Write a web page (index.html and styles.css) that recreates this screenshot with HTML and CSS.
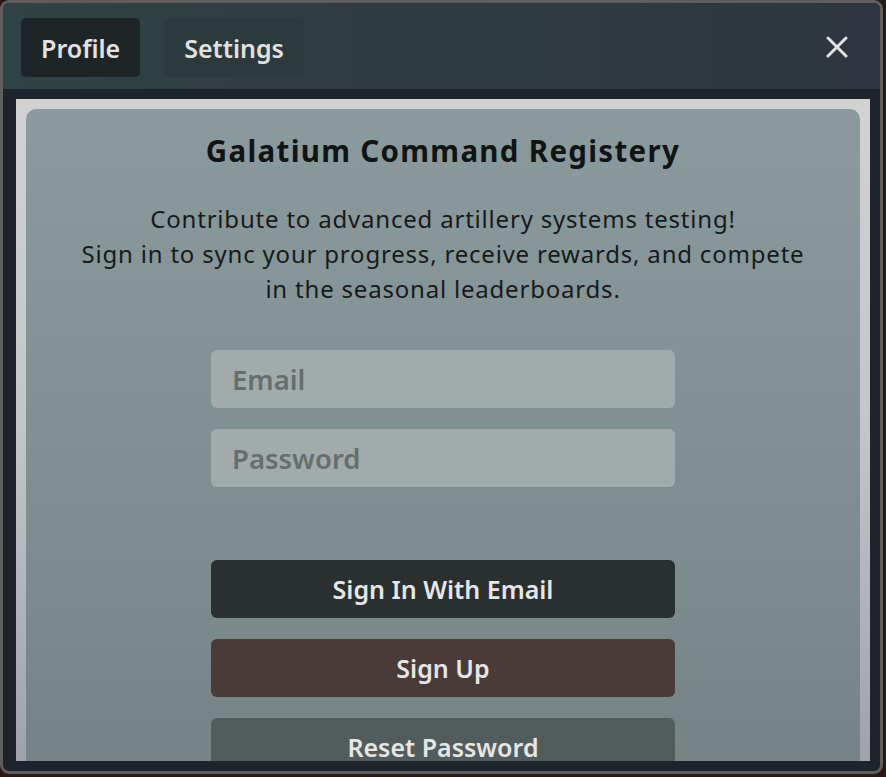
FILE: index.html
```html
<!DOCTYPE html>
<html>
<head>
<meta charset="utf-8">
<link rel="stylesheet" href="styles.css">
</head>
<body>
<div class="window">
  <div class="header">
    <div class="tabs">
      <div class="tab active">Profile</div>
      <div class="tab">Settings</div>
    </div>
    <div class="close">
      <svg width="22" height="22" viewBox="0 0 22 22"><path d="M2 2 L20 20 M20 2 L2 20" stroke="#e2e2e2" stroke-width="3" stroke-linecap="round"/></svg>
    </div>
  </div>
  <div class="body">
    <div class="scroll">
      <div class="panel">
        <h1 class="title">Galatium Command Registery</h1>
        <p class="intro">Contribute to advanced artillery systems testing!<br>Sign in to sync your progress, receive rewards, and compete<br>in the seasonal leaderboards.</p>
        <div class="form">
          <input class="field" type="text" placeholder="Email">
          <input class="field" type="password" placeholder="Password">
          <div class="buttons">
            <button class="btn btn-signin">Sign In With Email</button>
            <button class="btn btn-signup">Sign Up</button>
            <button class="btn btn-reset">Reset Password</button>
          </div>
        </div>
      </div>
    </div>
  </div>
</div>
</body>
</html>
```

FILE: styles.css
```css
* { box-sizing: border-box; }
html, body { margin: 0; padding: 0; }
body {
  width: 886px;
  height: 777px;
  background: #2a1818;
  font-family: "Noto Sans", "Open Sans", sans-serif;
  overflow: hidden;
}
.window {
  width: 883px;
  height: 774px;
  border: 3px solid #5e5e5e;
  border-radius: 9px;
  background: #1f232b;
  overflow: hidden;
  display: flex;
  flex-direction: column;
}
.header {
  height: 86px;
  flex: none;
  background: linear-gradient(90deg, #2f4244 0%, #2f3c42 50%, #2e3540 100%);
  display: flex;
  align-items: flex-start;
  justify-content: space-between;
  padding: 15px 0 0 18px;
}
.tabs { display: flex; gap: 24px; }
.tab {
  height: 59px;
  padding: 0 20px;
  border-radius: 5px;
  background: #2c3a3c;
  color: #e2e2e2;
  font-size: 25px;
  font-weight: 600;
  display: flex;
  align-items: center;
}
.tab.active { background: #1e2527; }
.close {
  width: 22px;
  height: 22px;
  margin: 18px 32px 0 0;
  display: flex;
}
.body {
  flex: 1;
  padding: 10px 10px 10px 13px;
  display: flex;
  min-height: 0;
}
.scroll {
  flex: 1;
  background: linear-gradient(180deg, #d2d2d2 0%, #c3c5c8 50%, #9fa3a9 100%);
  padding: 10px 10px 0 10px;
  overflow: hidden;
}
.panel {
  height: 800px;
  border-radius: 10px 10px 0 0;
  background: linear-gradient(180deg, #8b9b9d 0%, #7c8b8c 60%, #707c7d 100%);
  padding-top: 22px;
  text-align: center;
}
.title {
  margin: 0;
  font-size: 29.5px;
  line-height: 40px;
  font-weight: 700;
  letter-spacing: 1.3px;
  color: #111414;
}
.intro {
  margin: 30px 0 0;
  font-size: 24px;
  line-height: 35px;
  font-weight: 400;
  letter-spacing: 0.8px;
  color: #171a1a;
}
.form {
  width: 464px;
  margin: 44px auto 0;
  display: flex;
  flex-direction: column;
  gap: 21px;
}
.field {
  height: 58px;
  width: 100%;
  border: none;
  outline: none;
  border-radius: 6px;
  background: #a2abab;
  padding: 0 21px;
  font-family: "Noto Sans", "Open Sans", sans-serif;
  font-size: 27.5px;
  font-weight: 600;
  color: #333;
}
.field::placeholder { color: #666e6e; }
.buttons {
  margin-top: 52px;
  display: flex;
  flex-direction: column;
  gap: 21px;
}
.btn {
  height: 58px;
  width: 100%;
  border: none;
  border-radius: 6px;
  font-family: "Noto Sans", "Open Sans", sans-serif;
  font-size: 25px;
  font-weight: 600;
  color: #e6e6e6;
  padding: 0;
}
.btn-signin { background: #2a2f30; }
.btn-signup { background: #483b39; }
.btn-reset { background: #525c5c; }
```
